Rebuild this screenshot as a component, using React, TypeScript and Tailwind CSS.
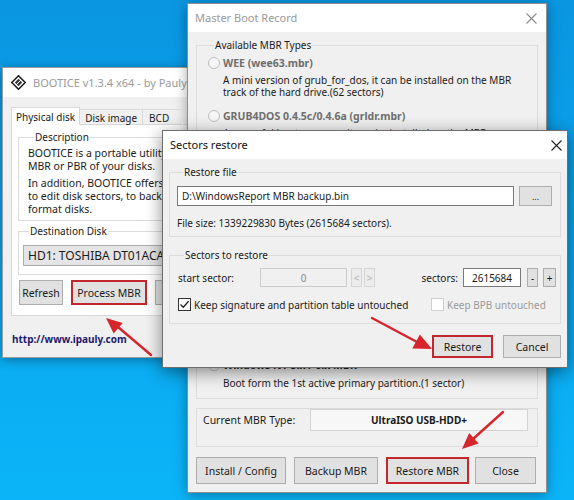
import React from "react";

function CloseX({ color }: { color: string }) {
  return (
    <svg width="11" height="11" viewBox="0 0 11 11">
      <path d="M0.5 0.5 L10.5 10.5 M10.5 0.5 L0.5 10.5" stroke={color} strokeWidth="1.1" fill="none" />
    </svg>
  );
}

function BooticeIcon() {
  return (
    <svg width="15" height="15" viewBox="0 0 15 15">
      <polygon points="7.5,0.8 14.2,7.5 7.5,14.2 0.8,7.5" fill="#fff" stroke="#1e1e1e" strokeWidth="1.6" />
      <polygon points="7.5,3.8 11.2,7.5 7.5,11.2 3.8,7.5" fill="#3a3a3a" />
      <path d="M5.2 9.8 L9.8 5.2" stroke="#fff" strokeWidth="1" />
    </svg>
  );
}

function Btn({
  label,
  w,
  h = 23,
  red = false,
}: {
  label: string;
  w: string;
  h?: number;
  red?: boolean;
}) {
  return (
    <div
      className={`${w} ${h === 27 ? "h-[27px]" : h === 25 ? "h-[25px]" : "h-[23px]"} shrink-0 flex items-center justify-center bg-[#e1e1e1] whitespace-nowrap text-[10.5px] text-[#1a1a1a] ${
        red ? "border-2 border-[#c1272d]" : "border border-[#adadad]"
      }`}
    >
      {label}
    </div>
  );
}

function Radio() {
  return <span className="block w-[12px] h-[12px] rounded-full border border-[#bdbdbd] bg-[#f6f6f6] shrink-0" />;
}

function MbrItem({ title, lines }: { title: string; lines: string[] }) {
  return (
    <div className="flex flex-col">
      <div className="flex items-center h-[14px]">
        <span className="w-[15px] shrink-0 flex">
          <Radio />
        </span>
        <span className="font-bold text-[10.5px] text-[#6e6e6e] whitespace-nowrap">{title}</span>
      </div>
      <div className="pl-[15px] mt-[4px] flex flex-col">
        {lines.map((l) => (
          <span key={l} className="leading-[12px] whitespace-nowrap">
            {l}
          </span>
        ))}
      </div>
    </div>
  );
}

function Bootice() {
  return (
    <div className="absolute left-[2px] top-[67px] w-[260px] h-[291px] bg-[#f0f0f0] border border-[#9c9c9c] shadow-[0_2px_10px_rgba(0,0,0,0.35)] flex flex-col">
      <div className="h-[29px] shrink-0 bg-white flex items-center pl-[8px] gap-[7px]">
        <BooticeIcon />
        <span className="text-[11px] text-[#9a9a9a] whitespace-nowrap">BOOTICE v1.3.4 x64 - by Pauly</span>
      </div>
      <div className="pl-[8px] pt-[10px] flex flex-col">
        <div className="flex items-end h-[18px] relative z-10">
          <div className="h-[18px] px-[4px] bg-white border border-b-0 border-[#d9d9d9] flex items-center whitespace-nowrap">
            Physical disk
          </div>
          <div className="h-[16px] px-[5px] border border-l-0 border-b-0 border-[#d9d9d9] flex items-center whitespace-nowrap">
            Disk image
          </div>
          <div className="h-[16px] px-[6px] w-[40px] border border-l-0 border-b-0 border-[#d9d9d9] flex items-center whitespace-nowrap">
            BCD
          </div>
        </div>
        <div className="h-[192px] -mt-px bg-white border border-[#d9d9d9] pl-[6px] pt-[6px] flex flex-col">
          <fieldset className="border border-[#dcdcdc] pl-[9px] pb-[4px]">
            <legend className="ml-[6px] px-[1px] leading-[13px]">Description</legend>
            <div className="mt-[3px] flex flex-col leading-[13px] text-[10.5px] whitespace-nowrap">
              <span>BOOTICE is a portable utility to install/backup/restore the</span>
              <span>MBR or PBR of your disks.</span>
              <span className="mt-[4px]">In addition, BOOTICE offers the ability</span>
              <span>to edit disk sectors, to backup, restore and</span>
              <span>format disks.</span>
            </div>
          </fieldset>
          <fieldset className="mt-[4px] border border-[#dcdcdc] pl-[4px] pb-[8px]">
            <legend className="ml-[6px] px-[1px] leading-[13px]">Destination Disk</legend>
            <div className="mt-[7px] h-[21px] bg-[#e5e5e5] border border-[#adadad] flex items-center pl-[4px] text-[12px] whitespace-nowrap">
              HD1: TOSHIBA DT01ACA100 (931.5 GB)
            </div>
          </fieldset>
          <div className="mt-[5px] ml-px flex gap-[8px]">
            <Btn label="Refresh" w="w-[44px]" h={25} />
            <Btn label="Process MBR" w="w-[76px]" h={25} red />
            <Btn label="Sector Edit" w="w-[70px]" h={25} />
          </div>
        </div>
        <div className="mt-[17px] pl-[1px] font-bold text-[10px] text-[#1d1a6b] leading-[13px]">http://www.ipauly.com</div>
      </div>
    </div>
  );
}

function MbrWindow() {
  return (
    <div className="absolute left-[187px] top-[3px] w-[360px] h-[490px] bg-[#f0f0f0] border border-[#8f8f8f] shadow-[0_2px_12px_rgba(0,0,0,0.35)] flex flex-col">
      <div className="h-[28px] shrink-0 bg-white flex items-center justify-between pl-[7px] pr-[9px]">
        <span className="text-[11px] text-[#9a9a9a] whitespace-nowrap">Master Boot Record</span>
        <CloseX color="#8a8a8a" />
      </div>
      <div className="px-[8px] flex flex-col">
        <fieldset className="mt-[7px] border border-[#dcdcdc] pl-[11px] pt-[4px] pb-[9px]">
          <legend className="ml-[6px] px-[1px] leading-[13px]">Available MBR Types</legend>
          <div className="flex flex-col gap-[11px]">
            <MbrItem
              title="WEE (wee63.mbr)"
              lines={[
                "A mini version of grub_for_dos, it can be installed on the MBR",
                "track of the hard drive.(62 sectors)",
              ]}
            />
            <MbrItem
              title="GRUB4DOS 0.4.5c/0.4.6a (grldr.mbr)"
              lines={["A powerful boot manager, it can be installed on the MBR", "track of the hard drive.(18 sectors)"]}
            />
            <div className="h-[185px]" />
            <div className="flex flex-col">
              <div className="flex items-center h-[14px]">
                <span className="w-[15px] shrink-0 flex">
                  <Radio />
                </span>
                <span className="font-bold text-[10.5px] text-[#1a1a1a] whitespace-nowrap">Windows NT 5.x / 6.x MBR</span>
              </div>
              <span className="pl-[15px] mt-[5px] leading-[12px] whitespace-nowrap">
                Boot form the 1st active primary partition.(1 sector)
              </span>
            </div>
          </div>
        </fieldset>
        <fieldset className="mt-[9px] h-[39px] border border-[#dcdcdc] pl-[6px] pr-[9px] flex items-center">
          <div className="flex items-center w-full">
            <span className="w-[107px] shrink-0 whitespace-nowrap text-[10.5px]">Current MBR Type:</span>
            <div className="flex-1 h-[22px] bg-[#f7f7f7] border border-[#d4d4d4] flex items-center justify-center font-bold text-[10px] whitespace-nowrap">
              UltraISO USB-HDD+
            </div>
          </div>
        </fieldset>
        <div className="mt-[10px] flex">
          <Btn label="Install / Config" w="w-[90px]" h={27} />
          <div className="w-[8px]" />
          <Btn label="Backup MBR" w="w-[84px]" h={27} />
          <div className="w-[8px]" />
          <Btn label="Restore MBR" w="w-[83px]" h={27} red />
          <div className="w-[6px]" />
          <Btn label="Close" w="w-[61px]" h={27} />
        </div>
      </div>
    </div>
  );
}

function SectorsRestore() {
  return (
    <div className="absolute left-[162px] top-[130px] w-[406px] h-[238px] bg-[#f0f0f0] border border-[#6e6e6e] shadow-[0_4px_16px_rgba(0,0,0,0.45)] flex flex-col">
      <div className="h-[28px] shrink-0 bg-white flex items-center justify-between pl-[7px] pr-[5px]">
        <span className="text-[11px] text-[#111] whitespace-nowrap">Sectors restore</span>
        <CloseX color="#222" />
      </div>
      <div className="px-[6px] flex flex-col">
        <fieldset className="mt-[7px] border border-[#dcdcdc] pl-[7px] pr-[8px] pb-[6px]">
          <legend className="ml-[6px] px-[1px] leading-[13px]">Restore file</legend>
          <div className="mt-[7px] flex items-center gap-[5px]">
            <div className="w-[337px] h-[20px] bg-white border border-[#7a7a7a] flex items-center pl-[4px] whitespace-nowrap">
              D:\WindowsReport MBR backup.bin
            </div>
            <div className="w-[33px] h-[20px] bg-[#e1e1e1] border border-[#adadad] flex items-center justify-center text-[9px] leading-[9px]">
              ...
            </div>
          </div>
          <div className="mt-[10px] leading-[14px] whitespace-nowrap">File size: 1339229830 Bytes (2615684 sectors).</div>
        </fieldset>
        <fieldset className="mt-[12px] border border-[#dcdcdc] pl-[8px] pr-[4px] pb-[12px]">
          <legend className="ml-[6px] px-[1px] leading-[13px]">Sectors to restore</legend>
          <div className="mt-[6px] flex items-center h-[19px]">
            <span className="w-[82px] shrink-0 whitespace-nowrap">start sector:</span>
            <div className="w-[87px] h-[19px] bg-[#f0f0f0] border border-[#cccccc] flex items-center justify-center text-[#8a8a8a]">
              0
            </div>
            <div className="ml-[4px] w-[11px] h-[19px] bg-[#ececec] border border-[#d5d5d5] flex items-center justify-center text-[#b4b4b4]">
              &lt;
            </div>
            <div className="ml-[2px] w-[11px] h-[19px] bg-[#ececec] border border-[#d5d5d5] flex items-center justify-center text-[#b4b4b4]">
              &gt;
            </div>
            <div className="flex-1" />
            <span className="whitespace-nowrap">sectors:</span>
            <div className="ml-[5px] w-[58px] h-[19px] bg-white border border-[#7a7a7a] flex items-center justify-center">
              2615684
            </div>
            <div className="ml-[6px] w-[11px] h-[19px] bg-[#e1e1e1] border border-[#adadad] flex items-center justify-center">
              -
            </div>
            <div className="ml-[5px] w-[13px] h-[19px] bg-[#e1e1e1] border border-[#adadad] flex items-center justify-center">
              +
            </div>
          </div>
          <div className="mt-[11px] flex items-center h-[13px]">
            <div className="w-[253px] shrink-0 flex items-center gap-[3px]">
              <span className="w-[13px] h-[13px] bg-white border border-[#333] flex items-center justify-center">
                <svg width="11" height="11" viewBox="0 0 11 11">
                  <path d="M1.5 5.5 L4.3 8.3 L9.6 2.2" stroke="#222" strokeWidth="1.3" fill="none" />
                </svg>
              </span>
              <span className="whitespace-nowrap">Keep signature and partition table untouched</span>
            </div>
            <div className="flex items-center gap-[3px]">
              <span className="w-[13px] h-[13px] bg-white border border-[#cfcfcf]" />
              <span className="whitespace-nowrap text-[#9a9a9a]">Keep BPB untouched</span>
            </div>
          </div>
        </fieldset>
        <div className="mt-[11px] flex justify-end">
          <Btn label="Restore" w="w-[61px]" red />
          <div className="w-[10px]" />
          <Btn label="Cancel" w="w-[58px]" />
        </div>
      </div>
    </div>
  );
}

function Arrows() {
  return (
    <svg className="absolute left-0 top-0 pointer-events-none" width="574" height="500" viewBox="0 0 574 500">
      <g stroke="#d6262c" strokeWidth="2.4" fill="#d6262c" strokeLinecap="round">
        <line x1="151" y1="355" x2="118" y2="327" />
        <polygon points="106,318 113.7,333.6 122.7,323" stroke="none" />
        <line x1="372" y1="318" x2="417" y2="342" />
        <polygon points="432,349 419.9,334.4 412.3,348.6" stroke="none" />
        <line x1="503" y1="412" x2="473" y2="439" />
        <polygon points="462,449 478.6,443.4 469.2,433" stroke="none" />
      </g>
    </svg>
  );
}

export default function App() {
  return (
    <div className="relative w-[574px] h-[500px] overflow-hidden bg-linear-to-b from-[#0a96e1] to-[#0bb4f8] font-['Noto_Sans',sans-serif] text-[10px] leading-[12px] text-[#1a1a1a]">
      <Bootice />
      <MbrWindow />
      <SectorsRestore />
      <Arrows />
    </div>
  );
}
